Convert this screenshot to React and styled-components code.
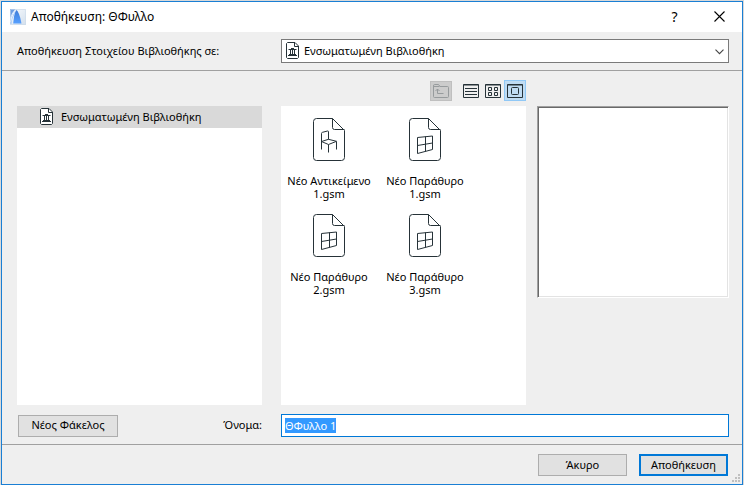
import React, { useEffect, useRef } from 'react'
import styled, { createGlobalStyle } from 'styled-components'

const files = [
  { id: 1, name: 'Νέο Αντικείμενο 1.gsm', kind: 'object' },
  { id: 2, name: 'Νέο Παράθυρο 1.gsm', kind: 'window' },
  { id: 3, name: 'Νέο Παράθυρο 2.gsm', kind: 'window' },
  { id: 4, name: 'Νέο Παράθυρο 3.gsm', kind: 'window' },
]

export default function App() {
  const nameInput = useRef(null)

  useEffect(() => {
    nameInput.current.focus()
    nameInput.current.select()
  }, [])

  return (
    <>
      <GlobalStyle />
      <Screen>
        <Dialog>
          <TitleBar>
            <AppLogo />
            <Title>Αποθήκευση: ΘΦυλλο</Title>
            <TitleButton type="button" aria-label="Βοήθεια">?</TitleButton>
            <TitleButton type="button" aria-label="Κλείσιμο">
              <svg width="11" height="11" viewBox="0 0 11 11" fill="none" stroke="#000">
                <path d="M.5.5l10 10M10.5.5l-10 10" strokeWidth="1.1" />
              </svg>
            </TitleButton>
          </TitleBar>

          <TargetRow>
            <label htmlFor="target">Αποθήκευση Στοιχείου Βιβλιοθήκης σε:</label>
            <SelectBox>
              <SelectIcon><LibraryIcon /></SelectIcon>
              <Select id="target">
                <option>Ενσωματωμένη Βιβλιοθήκη</option>
              </Select>
              <SelectArrow width="9" height="6" viewBox="0 0 9 6" fill="none" stroke="#444">
                <path d="M.5.7l4 4 4-4" strokeWidth="1.1" />
              </SelectArrow>
            </SelectBox>
          </TargetRow>

          <Body>
            <Toolbar>
              <UpButton type="button" disabled aria-label="Επάνω"><UpIcon /></UpButton>
              <ViewButton type="button" aria-label="Λίστα"><ListIcon /></ViewButton>
              <ViewButton type="button" aria-label="Μικρά εικονίδια"><GridIcon /></ViewButton>
              <ViewButton type="button" $active aria-label="Μεγάλα εικονίδια"><LargeIcon /></ViewButton>
            </Toolbar>
            <Tree>
              <TreeItem>
                <LibraryIcon />
                <span>Ενσωματωμένη Βιβλιοθήκη</span>
              </TreeItem>
            </Tree>
            <FileList>
              {files.map(file => (
                <FileItem key={file.id}>
                  <FileIcon kind={file.kind} />
                  <FileName>{file.name}</FileName>
                </FileItem>
              ))}
            </FileList>
            <Preview />
          </Body>

          <NameRow>
            <NameLeft>
              <Button type="button" $width={100}>Νέος Φάκελος</Button>
              <label htmlFor="name">Όνομα:</label>
            </NameLeft>
            <NameInput id="name" ref={nameInput} defaultValue="ΘΦυλλο 1" spellCheck={false} />
          </NameRow>

          <Footer>
            <Button type="button" $width={89}>Άκυρο</Button>
            <Button type="submit" $width={89} $primary>Αποθήκευση</Button>
            <Grip />
          </Footer>
        </Dialog>
      </Screen>
    </>
  )
}

function AppLogo() {
  return (
    <svg width="16" height="16" viewBox="0 0 16 16">
      <defs>
        <linearGradient id="logoBack" x1="0" y1="0" x2="1" y2="1">
          <stop offset="0" stopColor="#fafcff" />
          <stop offset="1" stopColor="#d3dfec" />
        </linearGradient>
        <linearGradient id="logoBlue" x1="0" y1="0" x2="0" y2="1">
          <stop offset="0" stopColor="#3f7bd6" />
          <stop offset="1" stopColor="#57a0ff" />
        </linearGradient>
      </defs>
      <rect width="16" height="16" fill="url(#logoBack)" />
      <path d="M0 0H5.500Q1.800 3.500 0 9z" fill="#6f9fe4" />
      <path d="M0 10.500Q2 4 5.500 1.500L4.500 5Q2 9 1.500 15H0z" fill="#a9cbfa" />
      <path d="M6 .5Q9.500 3 11.500 14.500H3.200Q3.500 7 6 .5z" fill="url(#logoBlue)" />
      <path d="M.5 13Q2 4.500 6.200 1" fill="none" stroke="#eef5ff" />
      <path d="M.5.500h15v15H.5z" fill="none" stroke="#ccdaea" strokeOpacity=".6" />
    </svg>
  )
}

function LibraryIcon() {
  return (
    <svg width="13" height="17" viewBox="0 0 13 17" fill="none" stroke="#263238">
      <path d="M1.500.5h7.500l3.500 3.500v11.500l-1 1h-10l-1-1v-14z" fill="#fff" />
      <path d="M8.500.5v4h4" />
      <path d="M5 6.500h3M2.500 7.500h8M4.500 8v4M6.500 8v4M8.500 8v4M2 13.500h9M3 12.500h7" />
    </svg>
  )
}

function FileIcon({ kind }) {
  return (
    <svg width="32" height="43" viewBox="0 0 32 43" fill="none" stroke="#263238">
      <path d="M3.500.5h16l12 12v27a3 3 0 0 1-3 3h-25a3 3 0 0 1-3-3v-36a3 3 0 0 1 3-3z" />
      <path d="M19.500.5v9a2 2 0 0 0 2 2h10" />
      {kind === 'object' ? (
        <path d="M8.500 31.500V15.500q0-1 1-1.200l5-1.300q1-.2 1 .8v7.700M8.500 23.500l7-2.200 8 2-8 3.200zM15.500 26.500v8M23.500 23.500v8" />
      ) : (
        <path d="M8.500 19.500l15-1.500v13.500l-15 4zM16.500 18.500v15M8.500 27.500l15-2.500" />
      )}
    </svg>
  )
}

function UpIcon() {
  return (
    <svg width="16" height="14" viewBox="0 0 16 14" fill="none" stroke="#979b9d">
      <path d="M1.500 13.500q-1 0-1-1v-10.500q0-1.500 1-1.500h4l1.500 2h7.500q1 0 1 1v9q0 1-1 1z" />
      <path d="M.5 2.500h6M4.500 5v4.500h6M2.500 7l2-2 2 2" />
    </svg>
  )
}

function ListIcon() {
  return (
    <svg width="16" height="14" viewBox="0 0 16 14" fill="none" stroke="#263238">
      <path d="M.5.500h15v13H.5zM.5 1h15M2 4.500h12M2 7.500h12M2 10.500h12" />
    </svg>
  )
}

function GridIcon() {
  return (
    <svg width="16" height="14" viewBox="0 0 16 14" fill="none" stroke="#263238">
      <path d="M.5.500h15v13H.5zM.5 1h15" />
      <path d="M3.500 3.500h3v3h-3zM9.500 3.500h3v3h-3zM3.500 8.500h3v3h-3zM9.500 8.500h3v3h-3z" />
    </svg>
  )
}

function LargeIcon() {
  return (
    <svg width="16" height="14" viewBox="0 0 16 14" fill="none" stroke="#263238">
      <path d="M.5.500h15v13H.5zM.5 1h15" />
      <rect x="4.500" y="3.500" width="7" height="7" rx="1" />
    </svg>
  )
}

function Grip() {
  return (
    <GripSvg width="8" height="8" viewBox="0 0 8 8" fill="#bfbfbf">
      <path d="M6 0h2v2H6zM3 3h2v2H3zM6 3h2v2H6zM0 6h2v2H0zM3 6h2v2H3zM6 6h2v2H6z" />
    </GripSvg>
  )
}

const GlobalStyle = createGlobalStyle`
  * {
    box-sizing: border-box;
  }
  body {
    margin: 0;
    background: #d9d9d9;
    color: #000;
    font: 11px/13px "Noto Sans", "Open Sans", sans-serif;
  }
  button, input, select {
    font: inherit;
    color: inherit;
  }
`
const Screen = styled.div`
  display: flex;
  min-height: 100vh;
  padding: 1px 1px 0;
`
const Dialog = styled.form`
  flex: 1;
  display: flex;
  flex-direction: column;
  border: 1px solid #1a7fd4;
  background: #efefef;
`
const TitleBar = styled.header`
  display: flex;
  align-items: center;
  height: 30px;
  padding-left: 8px;
  background: #fff;
`
const Title = styled.h1`
  flex: 1;
  margin: 0 0 0 5px;
  font-size: 12px;
  font-weight: 400;
  line-height: 16px;
`
const TitleButton = styled.button`
  display: flex;
  align-items: center;
  justify-content: center;
  width: 45px;
  height: 30px;
  padding: 0 0 2px;
  border: 0;
  background: none;
  font-size: 14px;
`
const TargetRow = styled.div`
  display: grid;
  grid-template-columns: 245fr 448fr;
  column-gap: 19px;
  align-items: center;
  padding: 7px 13px 7px 15px;
  border-bottom: 1px solid #a0a0a0;
  white-space: nowrap;

  label {
    padding-bottom: 2px;
  }
`
const SelectBox = styled.div`
  position: relative;
`
const SelectIcon = styled.span`
  position: absolute;
  top: 3px;
  left: 5px;
  display: flex;
  pointer-events: none;
`
const SelectArrow = styled.svg`
  position: absolute;
  top: 10px;
  right: 5px;
  pointer-events: none;
`
const Select = styled.select`
  display: block;
  width: 100%;
  height: 24px;
  padding: 0 20px 2px 22px;
  border: 1px solid #7a7a7a;
  border-radius: 0;
  background: #fff;
  appearance: none;
`
const Body = styled.main`
  flex: 1;
  display: grid;
  grid-template-columns: 264fr 245fr 203fr;
  grid-template-rows: auto 1fr;
  padding: 9px 13px 0 15px;
`
const Toolbar = styled.div`
  grid-column: 2;
  display: flex;
  justify-content: flex-end;
  align-items: center;
  margin-bottom: 5px;
`
const ViewButton = styled.button`
  display: flex;
  align-items: center;
  justify-content: center;
  width: 22px;
  height: 21px;
  padding: 0;
  border: 1px solid ${props => (props.$active ? '#90c8f6' : 'transparent')};
  background: ${props => (props.$active ? '#c0dcf3' : 'none')};
`
const UpButton = styled(ViewButton)`
  height: 20px;
  margin-right: 8px;
  border-color: #bfbfbf;
  background: #cccccc;
`
const Tree = styled.ul`
  grid-column: 1;
  margin: 0 19px 0 0;
  padding: 0;
  background: #fff;
  list-style: none;
`
const TreeItem = styled.li`
  display: flex;
  align-items: center;
  gap: 8px;
  height: 22px;
  padding: 0 0 1px 23px;
  background: #d9d9d9;
`
const FileList = styled.ul`
  display: flex;
  flex-wrap: wrap;
  align-content: flex-start;
  margin: 0;
  padding: 12px 0 0;
  background: #fff;
  list-style: none;
`
const FileItem = styled.li`
  display: flex;
  flex-direction: column;
  align-items: center;
  width: 96px;
  height: 96px;
`
const FileName = styled.span`
  width: 90px;
  margin-top: 13px;
  text-align: center;
`
const Preview = styled.section`
  height: 192px;
  margin-left: 11px;
  border: 1px solid;
  border-color: #a0a0a0 #fff #fff #a0a0a0;
  background: #fff;
  box-shadow: inset 1px 1px #696969, inset -1px -1px #e3e3e3;
`
const NameRow = styled.div`
  display: grid;
  grid-template-columns: 245fr 448fr;
  column-gap: 19px;
  align-items: center;
  padding: 9px 13px 7px 15px;
  border-bottom: 1px solid #a0a0a0;
`
const NameLeft = styled.div`
  display: flex;
  align-items: center;
  justify-content: space-between;
  padding-left: 1px;

  label {
    padding-bottom: 2px;
  }
`
const NameInput = styled.input`
  width: 100%;
  height: 23px;
  padding: 0 3px;
  border: 1px solid #0078d7;
  border-radius: 0;
  outline: none;
  background: #fff;

  &::selection {
    background: #3399ff;
    color: #fff;
  }
`
const Button = styled.button`
  width: ${props => props.$width}px;
  height: 22px;
  padding: 0 0 2px;
  border: ${props => (props.$primary ? '2px solid #0078d7' : '1px solid #adadad')};
  background: #e1e1e1;
`
const Footer = styled.footer`
  position: relative;
  display: flex;
  justify-content: flex-end;
  gap: 12px;
  padding: 9px 14px 8px;
`
const GripSvg = styled.svg`
  position: absolute;
  right: 2px;
  bottom: 2px;
`
